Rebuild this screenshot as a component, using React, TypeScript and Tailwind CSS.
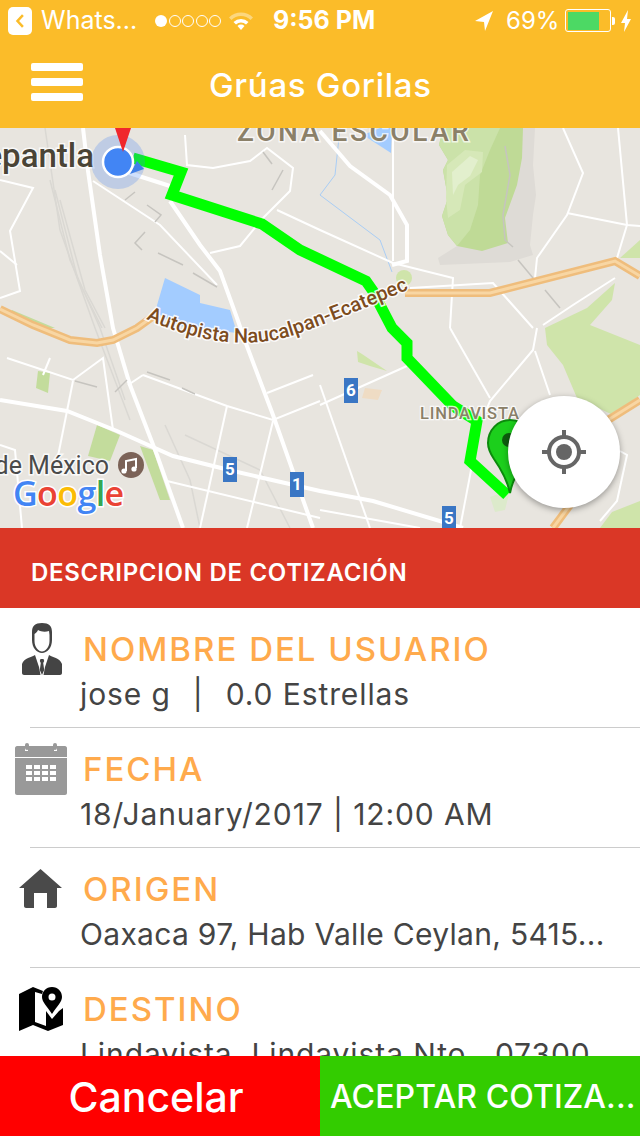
const wideRoads = [
  "83,128 88,171 100,255 113,328 130,385 157,455 183,528",
  "170,201 200,245 220,271 237,318 245,341 273,415 313,528",
  "0,400 67,411 117,431 173,456 233,471 320,491 373,501 463,528",
  "120,170 170,186",
  "320,131 350,166 390,195 407,225 407,261 392,265",
];

const thinRoads = [
  "93,181 160,225 217,285",
  "210,253 240,246 263,218",
  "185,135 187,165 213,168 250,161 267,148 293,168 290,191 263,218",
  "277,210 320,230 393,263 453,278 450,328",
  "393,138 393,261",
  "410,288 493,283 533,328",
  "563,128 583,173 567,215 537,258 535,278",
  "567,213 627,225 640,226",
  "618,128 627,225 617,258",
  "615,278 573,305 543,325",
  "537,328 533,350 490,401 483,418",
  "535,351 550,395",
  "450,328 490,398",
  "320,405 407,366",
  "320,385 370,528",
  "472,465 460,528",
  "620,451 627,455 617,501 600,521",
  "0,180 33,188 10,231 20,291 0,298",
  "0,251 17,265",
  "7,358 73,380 103,358 113,430",
  "143,375 227,406 273,420 320,401",
  "227,406 200,528",
  "273,421 247,528",
  "267,393 313,375",
  "167,481 320,518",
  "73,381 57,461",
  "0,445 15,450 22,528",
  "320,510 420,528",
  "128,385 143,375",
  "50,358 43,375",
];

const railLines = [
  "45,128 60,230 95,328 130,420",
  "50,180 70,260 100,328 125,400",
  "60,200 85,290 105,328",
  "55,190 78,280 102,328",
  "165,425 190,480 200,528",
  "185,435 260,470 290,528",
];

const darkLines = [
  "125,200 135,192",
  "147,205 161,215 155,222",
  "145,232 135,243 142,250",
  "158,253 183,265",
  "193,273 217,287",
  "263,152 272,164",
  "283,170 272,190",
  "147,372 170,380",
  "75,381 97,387",
  "115,392 127,380",
  "182,388 195,394",
  "505,146 510,175 503,215 505,240 513,247",
  "518,260 533,278",
  "545,290 560,308",
];

const Badge = ({ x, y, label }: { x: number; y: number; label: string }) => (
  <g>
    <rect x={x} y={y} width="14" height="25" fill="#3a76c4" />
    <text
      x={x + 7}
      y={y + 18}
      textAnchor="middle"
      fontSize="17"
      fontWeight="700"
      fill="#fff"
      className="font-['Roboto',sans-serif]"
    >
      {label}
    </text>
  </g>
);

const Highway = ({ points, width = 8 }: { points: string; width?: number }) => (
  <g>
    <polyline points={points} fill="none" stroke="#efbd7c" strokeWidth={width} />
    <polyline points={points} fill="none" stroke="#f8d6a3" strokeWidth="3" />
  </g>
);

const MapView = () => (
  <svg viewBox="0 128 640 400" className="block h-full w-full bg-[#e8e5df]">
    {/* terrain */}
    <polygon points="520,128 535,128 533,165 536,195 533,215 530,245 533,255 510,262 440,265 438,258 457,246 505,218" fill="#dedbd6" />
    <polygon points="439,145 448,160 443,170 448,198 442,216 448,235 457,246 482,251 508,243 505,218 517,185 522,158 523,128 443,128" fill="#bfda96" />
    <polygon points="439,145 448,160 443,170 448,198 442,216 448,235 457,246 470,230 478,205 480,175 490,150 500,128 443,128" fill="#cbe2a9" />
    <polygon points="447,165 465,150 483,152 482,172 465,185 460,210 448,218 446,198" fill="#d6e8b8" />
    <polygon points="452,172 470,156 478,160 470,176 458,185 453,195" fill="#e2efcd" />
    <polygon points="545,328 587,308 615,283 612,300 590,325 640,345 640,395 613,415 577,398 563,365 547,345" fill="#cfe4aa" />
    <polygon points="620,258 640,240 640,258" fill="#cfe4aa" />
    <polygon points="600,528 612,512 640,501 640,528" fill="#cfe4aa" />
    <polygon points="38,371 50,373 48,393 36,388" fill="#c3dc9c" />
    <polygon points="97,425 120,435 110,461 88,456" fill="#c3dc9c" />
    <polygon points="140,446 153,450 170,500 160,500" fill="#c3dc9c" />
    <polygon points="357,351 362,354 387,371 370,366 358,362" fill="#cfe4aa" />
    <polygon points="490,497 510,490 505,510 495,512" fill="#dceacb" />
    <polygon points="365,388 382,390 378,400 362,398" fill="#efdcc4" />
    <circle cx="404" cy="278" r="8" fill="#cfe4aa" />
    <polygon points="12,310 55,328 40,328 10,314" fill="#c3dc9c" />

    {/* water */}
    <polygon points="165,278 200,295 200,303 230,310 237,333 180,326 155,312" fill="#a3ccff" />
    <polygon points="363,135 380,128 392,128 391,153" fill="#a3ccff" />
    <polyline points="340,128 335,175 320,195 380,240 392,272" fill="none" stroke="#a9cdf5" strokeWidth="1" />

    {/* roads */}
    {railLines.map((pts) => (
      <polyline key={pts} points={pts} fill="none" stroke="#dad8d3" strokeWidth="1.5" />
    ))}
    {thinRoads.map((pts) => (
      <polyline key={pts} points={pts} fill="none" stroke="#fff" strokeWidth="2" />
    ))}
    {wideRoads.map((pts) => (
      <polyline key={pts} points={pts} fill="none" stroke="#fff" strokeWidth="4" />
    ))}
    {darkLines.map((pts) => (
      <polyline key={pts} points={pts} fill="none" stroke="#c6c4bf" strokeWidth="1.5" />
    ))}

    {/* highway */}
    <Highway points="0,309 33,325 70,340 97,343 113,340 137,328 155,315" />
    <Highway points="405,293 490,293 615,261 640,276" />
    <Highway points="640,400 600,425" />
    <Highway points="570,505 553,528" />

    {/* route */}
    <polyline
      points="133,158 181,172 172,195 262,224 300,250 366,281 373,291 380,305 392,328 407,343 407,358 453,406 477,421 470,461 507,495"
      fill="none"
      stroke="#00ff00"
      strokeWidth="11"
      strokeLinejoin="miter"
    />

    {/* labels */}
    <g className="font-['Roboto',sans-serif]" style={{ paintOrder: "stroke" }}>
      <text x="237" y="141" fontSize="28" fontWeight="500" letterSpacing="2.6" fill="#8b8068" stroke="#fff" strokeWidth="3" strokeOpacity="0.7">
        ZONA ESCOLAR
      </text>
      <text x="94" y="167" textAnchor="end" fontSize="33" fontWeight="500" fill="#4a4436" stroke="#fff" strokeWidth="3" strokeOpacity="0.8">
        epantla
      </text>
      <path id="autopista" d="M146 319 Q 232 358 300 333 T 425 282" fill="none" />
      <text fontSize="20" fontWeight="500" fill="#7d4c1e" stroke="#fff" strokeWidth="3" strokeOpacity="0.85">
        <textPath href="#autopista">Autopista Naucalpan-Ecatepec</textPath>
      </text>
      <text x="420" y="419" fontSize="16.5" fontWeight="500" letterSpacing="0.8" fill="#8b8068" stroke="#fff" strokeWidth="2.5" strokeOpacity="0.8">
        LINDAVISTA
      </text>
      <text x="109" y="474" textAnchor="end" fontSize="25" fill="#4a4a4a" stroke="#fff" strokeWidth="3" strokeOpacity="0.8">
        de México
      </text>
    </g>
    <circle cx="131" cy="465" r="13" fill="#7b6257" />
    <path d="M126 471v-10l10-2v9" fill="none" stroke="#fff" strokeWidth="2" />
    <circle cx="124" cy="471" r="2.6" fill="#fff" />
    <circle cx="134" cy="469" r="2.6" fill="#fff" />

    <text x="13" y="506" fontSize="34" fontWeight="600" stroke="#fff" strokeWidth="3" letterSpacing="-0.6" className="font-['Open_Sans',sans-serif]" style={{ paintOrder: "stroke" }}>
      <tspan fill="#4285f4">G</tspan>
      <tspan fill="#ea4335">o</tspan>
      <tspan fill="#fbbc05">o</tspan>
      <tspan fill="#4285f4">g</tspan>
      <tspan fill="#34a853">l</tspan>
      <tspan fill="#ea4335">e</tspan>
    </text>

    <Badge x={344} y={378} label="6" />
    <Badge x={223} y={457} label="5" />
    <Badge x={290} y={472} label="1" />
    <Badge x={442} y={506} label="5" />

    {/* current position */}
    <circle cx="118" cy="162" r="27" fill="#4285f4" fillOpacity="0.25" />
    <polygon points="130,174 144,169 137,161" fill="#3f7fe8" />
    <circle cx="118" cy="162" r="15" fill="#4285f4" stroke="#fff" strokeWidth="2.5" />
    <polygon points="115,128 131,128 123,152" fill="#f0272c" />

    {/* destination pin */}
    <path d="M510 493c-3-14-9-24-16-34-4-6-6-10-6-16 0-13 10-23 22-23 8 0 15 4 20 10v30c-11 9-17 18-20 33z" fill="#1ccf1c" stroke="#0c8a0c" strokeWidth="2" />
    <circle cx="509" cy="440" r="7" fill="#0d5c0d" />
  </svg>
);

const UserIcon = () => (
  <svg viewBox="0 0 40 52" className="ml-[22px] mt-[15px] h-[52px] w-[40px]">
    <path
      fillRule="evenodd"
      d="M20 0c-7 0-10 3-10 9v8c0 8 5 13 10 13s10-5 10-13V9c0-6-3-9-10-9zM12.500 11c2-1 3-3 3.500-4 3 2 8 2 11 1l.5 4v6c0 6-4 10.500-7.500 10.500S12.500 24 12.500 18z"
      fill="#444"
    />
    <path d="M13 32c-3 2-11 3-13 9v9c0 1 1 2 2 2h16.500L17 44z" fill="#444" />
    <path d="M27 32c3 2 11 3 13 9v9c0 1-1 2-2 2H21.500L23 44z" fill="#444" />
    <path d="M18.500 36h3l.7 2-1 2 1 7-2.200 5-2.200-5 1-7-1-2z" fill="#444" />
  </svg>
);

const CalendarIcon = () => (
  <svg viewBox="0 0 52 52" className="ml-[15px] mt-[15px] h-[52px] w-[52px]">
    <path d="M2 3h8v5h3V3h26v5h3V3h8c1 0 2 1 2 2v9H0V5c0-1 1-2 2-2z" fill="#999" />
    <rect x="10" y="0" width="4" height="7" rx="2" fill="#999" />
    <rect x="38" y="0" width="4" height="7" rx="2" fill="#999" />
    <path d="M0 15h52v35c0 1-1 2-2 2H2c-1 0-2-1-2-2z" fill="#999" />
    <path
      d="M11 22h6v4h-6zM19 22h6v4h-6zM27 22h6v4h-6zM35 22h6v4h-6zM11 28h6v4h-6zM19 28h6v4h-6zM27 28h6v4h-6zM35 28h6v4h-6zM11 34h6v4h-6zM19 34h6v4h-6zM27 34h6v4h-6zM35 34h6v4h-6z"
      fill="#fff"
    />
  </svg>
);

const HomeIcon = () => (
  <svg viewBox="0 0 43 39" className="ml-[19px] mt-[21px] h-[39px] w-[43px]">
    <path d="M21.500 0L43 19h-5v18c0 1-1 2-2 2h-8V24H15v15H7c-1 0-2-1-2-2V19H0z" fill="#4a4a4a" />
  </svg>
);

const MapPinIcon = () => (
  <svg viewBox="0 0 44 44" className="ml-[19px] mt-[19px] h-[44px] w-[44px]">
    <path d="M0 7L14 0l10 4-1 3-7-2v30l11 4V24l6 8 7-8 4-3v17l-15 6-15-6-14 6z" fill="#000" />
    <path
      fillRule="evenodd"
      d="M33 0c-6 0-10 4.500-10 10 0 5 5 9 10 17 5-8 10-12 10-17 0-5.500-4-10-10-10zm0 6.500a3.500 3.500 0 1 1 0 7 3.500 3.500 0 0 1 0-7z"
      fill="#000"
    />
  </svg>
);

const rows = [
  {
    icon: <UserIcon />,
    title: "NOMBRE DEL USUARIO",
    text: "jose g\u00a0\u2009\u2009|\u2009\u2009\u00a00.0 Estrellas",
    textClass: "tracking-[0.9px]",
  },
  { icon: <CalendarIcon />, title: "FECHA", text: "18/January/2017 | 12:00 AM", textClass: "tracking-[0.9px]" },
  { icon: <HomeIcon />, title: "ORIGEN", text: "Oaxaca 97, Hab Valle Ceylan, 5415...", textClass: "tracking-[0.3px]" },
  { icon: <MapPinIcon />, title: "DESTINO", text: "Lindavista, Lindavista Nto., 07300...", textClass: "tracking-[0.9px]" },
];

const App = () => {
  return (
    <div className="flex h-[1136px] w-[640px] flex-col overflow-hidden bg-white font-['Inter',sans-serif]">
      {/* Status bar + title */}
      <header className="h-[128px] shrink-0 bg-[#fbbc29] text-white">
        <div className="flex h-[40px] items-center whitespace-nowrap pt-[1px]">
          <div className="ml-[8px] flex h-[28px] w-[24px] items-center justify-center rounded-[5px] bg-white">
            <svg viewBox="0 0 12 18" className="h-[16px] w-[10px]">
              <path d="M9.500 2L3 9l6.500 7" fill="none" stroke="#fbbc29" strokeWidth="3" />
            </svg>
          </div>
          <span className="ml-[9px] w-[93px] text-[25px]">Whats...</span>
          <div className="ml-[21px] flex gap-[1.500px]">
            <span className="h-[12px] w-[12px] rounded-full bg-white" />
            <span className="h-[12px] w-[12px] rounded-full border border-white" />
            <span className="h-[12px] w-[12px] rounded-full border border-white" />
            <span className="h-[12px] w-[12px] rounded-full border border-white" />
            <span className="h-[12px] w-[12px] rounded-full border border-white" />
          </div>
          <svg viewBox="0 0 24 20" className="ml-[8px] h-[20px] w-[24px]">
            <path d="M0 6.500a17 17 0 0 1 24 0l-2.500 2.500a13.500 13.500 0 0 0-19 0z" fill="#fff" fillOpacity="0.4" />
            <path d="M4.500 11a11 11 0 0 1 15 0l-2.500 2.500a7.500 7.500 0 0 0-10 0z" fill="#fff" />
            <path d="M8.500 15a5 5 0 0 1 7 0L12 19z" fill="#fff" />
          </svg>
          <span className="ml-[20px] w-[102px] text-[25px] font-bold">9:56 PM</span>
          <svg viewBox="0 0 18 20" className="ml-[100px] h-[20px] w-[18px]">
            <path d="M18 0L0 10l9 1 1 9z" fill="#fff" />
          </svg>
          <span className="ml-[13px] w-[50px] text-[24px]">69%</span>
          <div className="ml-[9px] flex h-[23px] w-[46px] rounded-[3px] border border-white bg-[#fbbc29] p-[1.500px]">
            <div className="h-full w-[31px] bg-[#4cd964]" />
          </div>
          <span className="ml-[1px] h-[8px] w-[3px] rounded-r-[2px] bg-white" />
          <svg viewBox="0 0 10 22" className="ml-[6px] h-[22px] w-[10px]">
            <path d="M7 0L0 13h4l-1 9 7-13H6z" fill="#fff" />
          </svg>
        </div>
        <div className="flex h-[88px] items-center">
          <div className="mb-[4px] ml-[31px] flex w-[52px] flex-col gap-[7.500px]">
            <span className="h-[7.500px] rounded-[2px] bg-white" />
            <span className="h-[7.500px] rounded-[2px] bg-white" />
            <span className="h-[7.500px] rounded-[2px] bg-white" />
          </div>
          <h1 className="ml-[126px] mt-[3px] text-[33px] font-medium tracking-[0.7px]">Grúas Gorilas</h1>
        </div>
      </header>

      {/* Map */}
      <div className="relative h-[400px] shrink-0">
        <MapView />
        <button className="absolute left-[508px] top-[268px] flex h-[112px] w-[112px] items-center justify-center rounded-full bg-white shadow-[0_2px_6px_rgba(0,0,0,0.35)]">
          <svg viewBox="0 0 44 44" className="h-[44px] w-[44px]">
            <circle cx="22" cy="22" r="15" fill="none" stroke="#666" strokeWidth="4" />
            <circle cx="22" cy="22" r="8" fill="#666" />
            <path d="M22 0v7M22 37v7M0 22h7M37 22h7" stroke="#666" strokeWidth="4" />
          </svg>
        </button>
      </div>

      {/* Section title */}
      <div className="flex h-[80px] shrink-0 items-center bg-[#da3726] pl-[31px] pt-[9px]">
        <h2 className="text-[24px] font-semibold tracking-[0.7px] text-white">DESCRIPCION DE COTIZACIÓN</h2>
      </div>

      {/* Details */}
      <div className="min-h-0 flex-1 overflow-hidden">
        {rows.map((row) => (
          <div key={row.title}>
            <div className="flex h-[119px]">
              <div className="w-[80px] shrink-0">{row.icon}</div>
              <div className="min-w-0 pr-[36px] pt-[22px]">
                <div className="h-[38px] pl-[3px] text-[33px] font-medium leading-[38px] tracking-[2px] text-[#ffaa4c]">
                  {row.title}
                </div>
                <div className={`mt-[6px] whitespace-nowrap text-[30px] font-normal leading-[40px] text-[#444] ${row.textClass}`}>
                  {row.text}
                </div>
              </div>
            </div>
            <div className="ml-[30px] h-px bg-[#ccc]" />
          </div>
        ))}
      </div>

      {/* Actions */}
      <div className="flex h-[80px] shrink-0">
        <button className="flex w-[320px] items-center justify-center bg-[#ff0000] pr-[8px] pt-[3px] text-[41px] font-medium text-white">
          Cancelar
        </button>
        <button className="flex w-[320px] items-center whitespace-nowrap bg-[#33cc00] pl-[10px] pt-[2px] text-[32px] font-medium tracking-[0.1px] text-white">
          ACEPTAR COTIZA...
        </button>
      </div>
    </div>
  );
};

export default App;
